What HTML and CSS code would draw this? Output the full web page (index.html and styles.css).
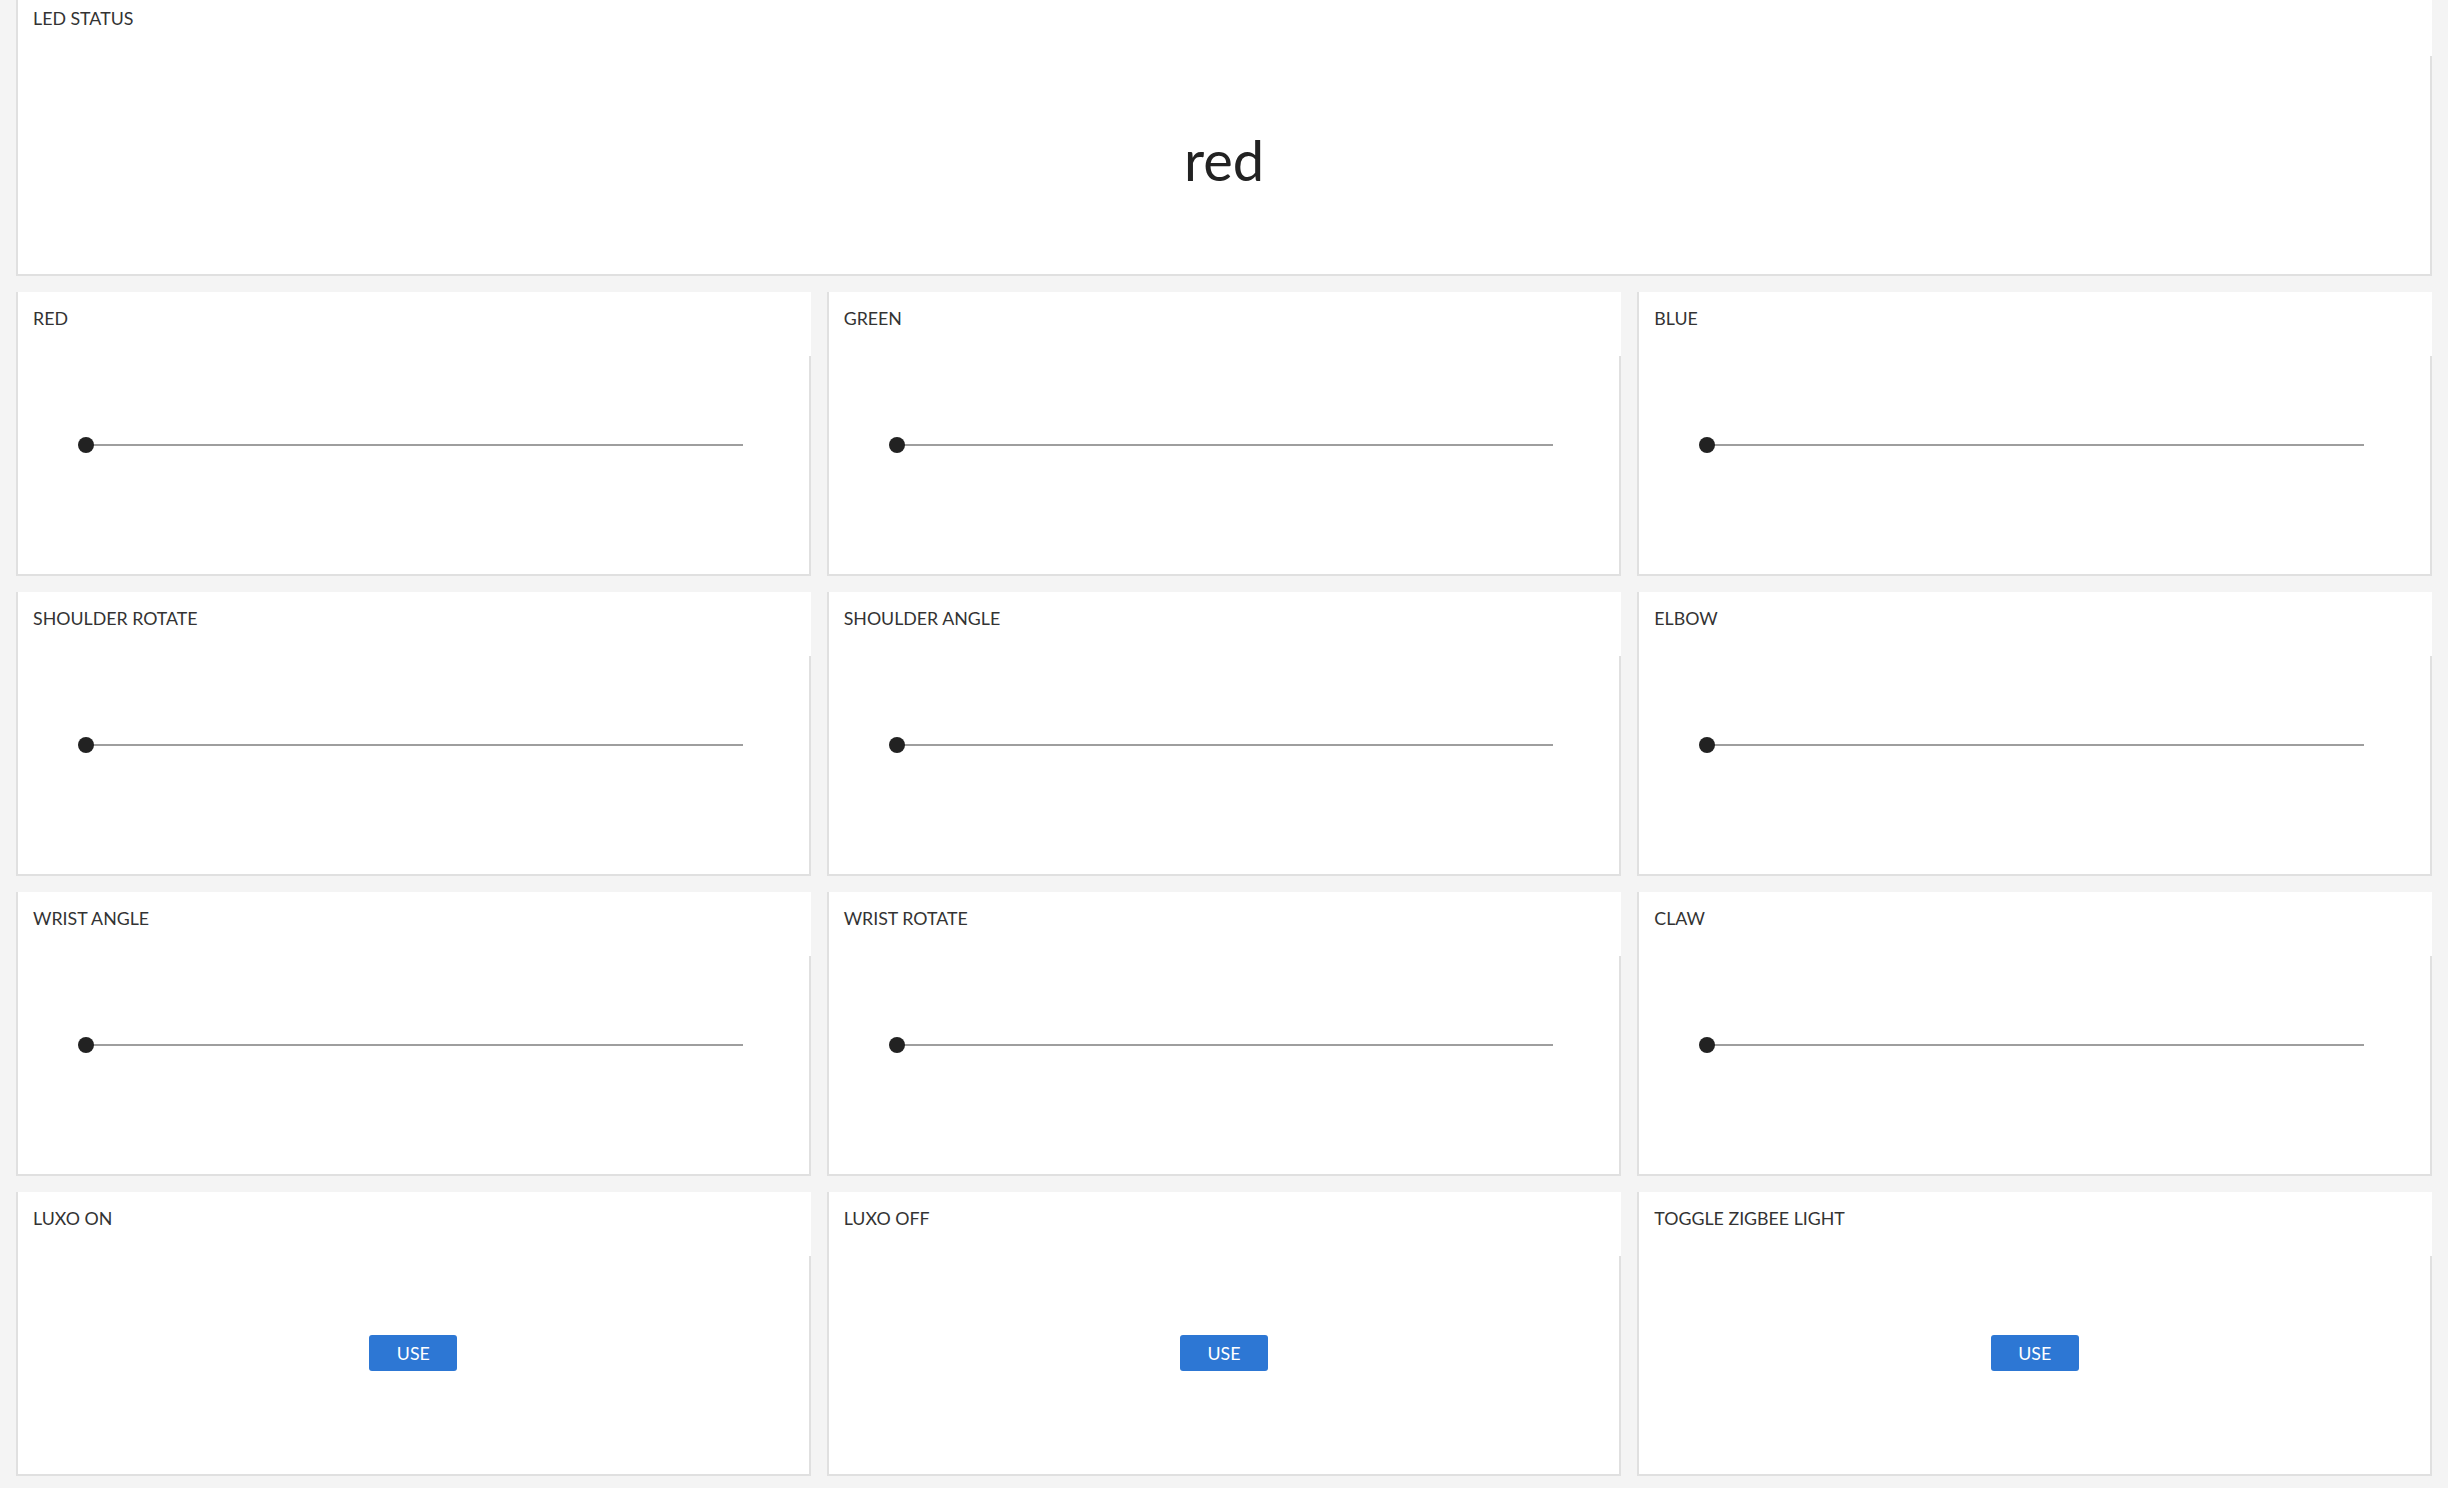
FILE: index.html
```html
<!DOCTYPE html>
<html>
<head>
<meta charset="utf-8">
<link rel="stylesheet" href="styles.css">
</head>
<body>
<div class="grid">
  <div class="card wide">
    <div class="title">LED STATUS</div>
    <div class="body status"><span class="value">red</span></div>
  </div>

  <div class="card"><div class="title">RED</div><div class="body slider-body"><div class="slider"><div class="thumb"></div><div class="track"></div></div></div></div>
  <div class="card"><div class="title">GREEN</div><div class="body slider-body"><div class="slider"><div class="thumb"></div><div class="track"></div></div></div></div>
  <div class="card"><div class="title">BLUE</div><div class="body slider-body"><div class="slider"><div class="thumb"></div><div class="track"></div></div></div></div>

  <div class="card"><div class="title">SHOULDER ROTATE</div><div class="body slider-body"><div class="slider"><div class="thumb"></div><div class="track"></div></div></div></div>
  <div class="card"><div class="title">SHOULDER ANGLE</div><div class="body slider-body"><div class="slider"><div class="thumb"></div><div class="track"></div></div></div></div>
  <div class="card"><div class="title">ELBOW</div><div class="body slider-body"><div class="slider"><div class="thumb"></div><div class="track"></div></div></div></div>

  <div class="card"><div class="title">WRIST ANGLE</div><div class="body slider-body"><div class="slider"><div class="thumb"></div><div class="track"></div></div></div></div>
  <div class="card"><div class="title">WRIST ROTATE</div><div class="body slider-body"><div class="slider"><div class="thumb"></div><div class="track"></div></div></div></div>
  <div class="card"><div class="title">CLAW</div><div class="body slider-body"><div class="slider"><div class="thumb"></div><div class="track"></div></div></div></div>

  <div class="card"><div class="title">LUXO ON</div><div class="body button-body"><button class="use">USE</button></div></div>
  <div class="card"><div class="title">LUXO OFF</div><div class="body button-body"><button class="use">USE</button></div></div>
  <div class="card"><div class="title">TOGGLE ZIGBEE LIGHT</div><div class="body button-body"><button class="use">USE</button></div></div>
</div>
</body>
</html>
```

FILE: styles.css
```css
html, body {
  margin: 0;
  padding: 0;
  background: #f4f4f4;
  font-family: Lato, "Liberation Sans", sans-serif;
  color: #222222;
  height: 1488px;
  overflow: hidden;
}

.grid {
  display: grid;
  grid-template-columns: repeat(3, 1fr);
  grid-auto-rows: 284px;
  gap: 16px;
  padding: 0 16px;
  margin-top: -8px;
}

.wide {
  grid-column: 1 / span 3;
}

.card {
  display: flex;
  flex-direction: column;
  background: #ffffff;
  border-left: 2px solid #e0e0e0;
  border-bottom: 2px solid #e0e0e0;
  min-width: 0;
}

.title {
  height: 64px;
  box-sizing: border-box;
  padding: 13px 16px 0 15px;
  font-size: 17.8px;
  line-height: 27px;
  color: #333333;
  background: #ffffff;
}

.body {
  flex: 1;
  border-right: 2px solid #e0e0e0;
  box-sizing: border-box;
}

.status {
  text-align: center;
  padding-top: 70px;
}

.value {
  font-size: 56px;
  line-height: 1.2;
  color: #222222;
}

.slider-body {
  padding: 81px 66px 0 60px;
}

.slider {
  display: flex;
  align-items: center;
  height: 16px;
}

.thumb {
  width: 16px;
  height: 16px;
  border-radius: 50%;
  background: #222222;
  flex: none;
  position: relative;
  z-index: 1;
}

.track {
  flex: 1;
  height: 2px;
  margin-left: -8px;
  background: #9e9e9e;
}

.button-body {
  display: flex;
  justify-content: center;
  align-items: flex-start;
  padding-top: 79px;
}

.use {
  width: 88px;
  height: 36px;
  border: none;
  border-radius: 3px;
  background: #2d77d4;
  color: #ffffff;
  font-family: Lato, "Liberation Sans", sans-serif;
  font-size: 17.8px;
  line-height: 36px;
  padding: 0;
  margin: 0;
}
```
